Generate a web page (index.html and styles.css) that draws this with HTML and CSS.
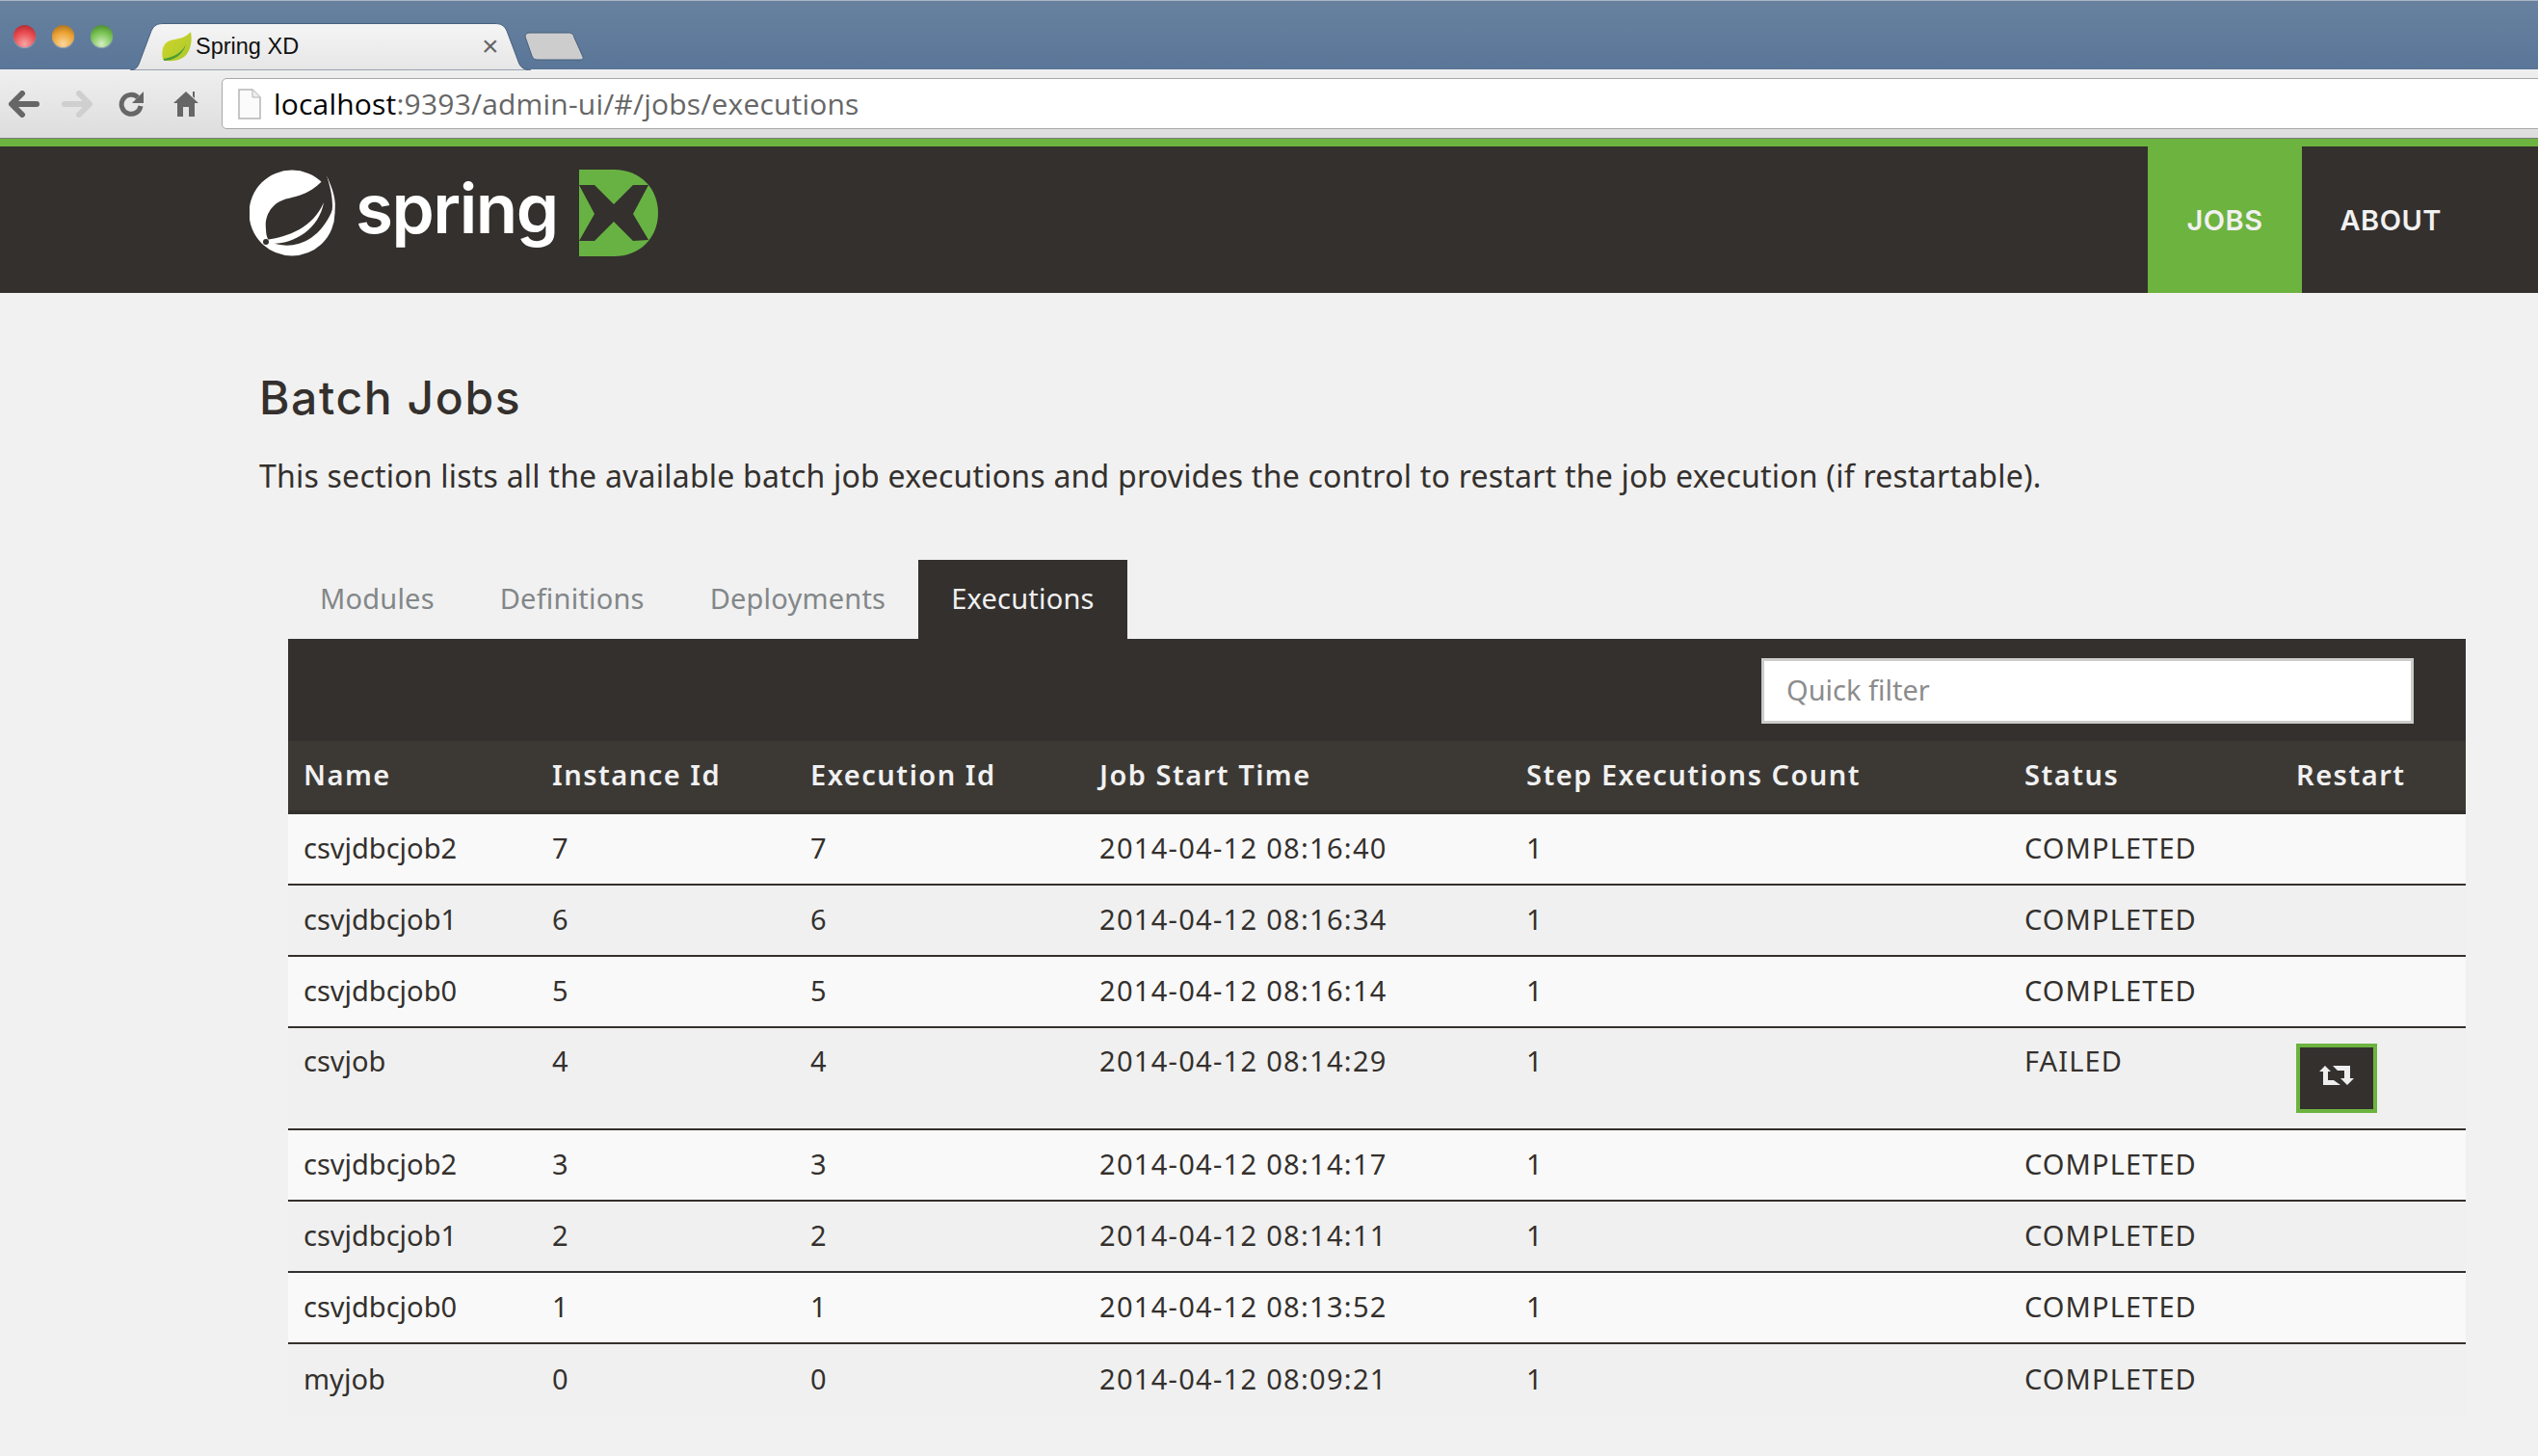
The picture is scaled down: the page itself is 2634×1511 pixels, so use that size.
FILE: index.html
```html
<!DOCTYPE html>
<html lang="en">
<head>
    <meta charset="UTF-8">
    <title>Spring XD</title>
    <link rel="stylesheet" href="styles.css">
</head>
<body>
    <div class="titlebar">
        <div class="lights">
            <span class="light red"></span>
            <span class="light orange"></span>
            <span class="light green"></span>
        </div>
        <div class="tab">
            <svg class="tab-shape" width="416" height="49" viewBox="0 0 416 49">
                <defs>
                    <linearGradient id="tabfill" x1="0" y1="0" x2="0" y2="1">
                        <stop offset="0" stop-color="#f5f5f5"/>
                        <stop offset="1" stop-color="#e6e6e6"/>
                    </linearGradient>
                </defs>
                <path d="M0 49 C6 48 8 46 10 40 L22 8 C25 2 28 0.5 35 0.5 L378 0.5 C385 0.5 388 2 391 8 L403 40 C405 46 408 48 416 49 Z" fill="url(#tabfill)" stroke="#47607d" stroke-width="1"/>
            </svg>
            <svg class="favicon" width="32" height="31" viewBox="0 0 32 31">
                <defs>
                    <linearGradient id="leaf" x1="0" y1="0" x2="1" y2="1">
                        <stop offset="0" stop-color="#d3d62a"/>
                        <stop offset="1" stop-color="#a9c92c"/>
                    </linearGradient>
                </defs>
                <path d="M31 0 C25 7 17 7 10 9 C3 11 0 18 2 29 C12 32 26 30 30 17 C32 11 32 5 31 0 Z" fill="url(#leaf)"/>
                <path d="M3 28 C13 26 21 23 26 13 C23 24 13 30 3 30 Z" fill="#4c9a35"/>
            </svg>
            <span class="tab-title">Spring XD</span>
            <span class="tab-close">&#215;</span>
        </div>
        <svg class="new-tab" width="62" height="30" viewBox="0 0 62 30">
            <path d="M1 5 C1 2 3 1 6 1 L45 1 C49 1 51 2 52 6 L61 26 C62 28 60 29 58 29 L15 29 C11 29 9 28 8 25 Z" fill="#cdcdcd" stroke="#47607d" stroke-width="1"/>
        </svg>
    </div>

    <div class="toolbar">
        <svg class="tool-icon tool-back" width="32" height="28" viewBox="0 0 32 28">
            <path d="M14 3 L3 14 L14 25 M4 14 L29 14" fill="none" stroke="#666" stroke-width="6" stroke-linecap="round" stroke-linejoin="round"/>
        </svg>
        <svg class="tool-icon tool-forward" width="32" height="28" viewBox="0 0 32 28">
            <path d="M18 3 L29 14 L18 25 M28 14 L3 14" fill="none" stroke="#cfcfcf" stroke-width="6" stroke-linecap="round" stroke-linejoin="round"/>
        </svg>
        <svg class="tool-icon tool-reload" width="28" height="28" viewBox="0 0 28 28">
            <path d="M21 7 A10 10 0 1 0 24 16" fill="none" stroke="#666" stroke-width="5"/>
            <path d="M27 1 L27 13 L15 13 Z" fill="#666"/>
        </svg>
        <svg class="tool-icon tool-home" width="26" height="28" viewBox="0 0 26 28">
            <path d="M13 1 L26 13 L22 13 L22 27 L16 27 L16 17 L10 17 L10 27 L4 27 L4 13 L0 13 Z M20 1 L22 1 L22 8 L20 6 Z" fill="#666"/>
        </svg>
        <div class="omnibox">
            <svg class="page-icon" width="24" height="32" viewBox="0 0 24 32">
                <path d="M1 1 L15 1 L23 9 L23 31 L1 31 Z" fill="#fbfbfb" stroke="#b5b5b5" stroke-width="1.5"/>
                <path d="M15 1 L15 9 L23 9" fill="#eee" stroke="#b5b5b5" stroke-width="1"/>
            </svg>
            <span class="url"><b>localhost</b>:9393/admin-ui/#/jobs/executions</span>
        </div>
    </div>

    <header class="site-header">
        <div class="logo">
            <svg class="logo-leaf" width="92" height="90" viewBox="0 0 92 90">
                <circle cx="44" cy="45" r="44.5" fill="#fff"/>
                <path d="M81 5 C67 24 52 27 40 30 C25 33 15 46 17 62 C17 67 18 70 20 74 C38 84 70 80 86 42 C87 28 85 16 81 5 Z" fill="#34302d"/>
                <path d="M80 6 C86 20 91 32 88 46 C86 58 80 66 72 74 L70 72 C80 60 86 48 86 38 C86 26 83 16 80 6 Z" fill="#fff"/>
                <path d="M17 73 C40 70 66 60 77 34 C72 62 46 78 20 77 Z" fill="#fff"/>
                <circle cx="17" cy="75" r="3" fill="#34302d"/>
            </svg>
            <span class="logo-text">spring</span>
            <svg class="logo-x" width="82" height="90" viewBox="0 0 82 90">
                <path d="M0 0 H36 C64 0 82 20 82 45 C82 70 64 90 36 90 H0 Z" fill="#67b243"/>
                <path d="M0 16 L16 16 L36 36 L56 16 L72 16 L56 46 L72 73 L56 74 L36 54 L16 74 L0 74 L16 46 Z" fill="#34302d"/>
            </svg>
        </div>
        <nav class="main-nav">
            <a class="nav-link active">JOBS</a>
            <a class="nav-link">ABOUT</a>
        </nav>
    </header>

    <main class="content">
        <h1>Batch Jobs</h1>
        <p class="intro">This section lists all the available batch job executions and provides the control to restart the job execution (if restartable).</p>

        <div class="panel">
            <ul class="tabs">
                <li>Modules</li>
                <li>Definitions</li>
                <li>Deployments</li>
                <li class="active">Executions</li>
            </ul>
            <div class="filter-bar">
                <input class="quick-filter" type="text" placeholder="Quick filter">
            </div>
            <table class="jobs">
                <thead>
                    <tr>
                        <th class="c-name">Name</th>
                        <th class="c-inst">Instance Id</th>
                        <th class="c-exec">Execution Id</th>
                        <th class="c-time">Job Start Time</th>
                        <th class="c-step">Step Executions Count</th>
                        <th class="c-status">Status</th>
                        <th class="c-restart">Restart</th>
                    </tr>
                </thead>
                <tbody>
                    <tr><td>csvjdbcjob2</td><td>7</td><td>7</td><td>2014-04-12 08:16:40</td><td>1</td><td>COMPLETED</td><td></td></tr>
                    <tr><td>csvjdbcjob1</td><td>6</td><td>6</td><td>2014-04-12 08:16:34</td><td>1</td><td>COMPLETED</td><td></td></tr>
                    <tr><td>csvjdbcjob0</td><td>5</td><td>5</td><td>2014-04-12 08:16:14</td><td>1</td><td>COMPLETED</td><td></td></tr>
                    <tr class="failed">
                        <td>csvjob</td><td>4</td><td>4</td><td>2014-04-12 08:14:29</td><td>1</td><td>FAILED</td>
                        <td class="restart-cell">
                            <button class="restart-btn">
                                <svg width="36" height="20" viewBox="0 0 36 20">
                                    <path d="M6 0 L12 6 L9 6 L9 15 L15 15 L22 20 L4 20 L4 6 L0 6 Z" fill="#eeeeee"/>
                                    <path d="M14 0 L32 0 L32 13 L36 13 L29 20 L22 13 L26 13 L26 5 L19 5 Z" fill="#eeeeee"/>
                                </svg>
                            </button>
                        </td>
                    </tr>
                    <tr><td>csvjdbcjob2</td><td>3</td><td>3</td><td>2014-04-12 08:14:17</td><td>1</td><td>COMPLETED</td><td></td></tr>
                    <tr><td>csvjdbcjob1</td><td>2</td><td>2</td><td>2014-04-12 08:14:11</td><td>1</td><td>COMPLETED</td><td></td></tr>
                    <tr><td>csvjdbcjob0</td><td>1</td><td>1</td><td>2014-04-12 08:13:52</td><td>1</td><td>COMPLETED</td><td></td></tr>
                    <tr><td>myjob</td><td>0</td><td>0</td><td>2014-04-12 08:09:21</td><td>1</td><td>COMPLETED</td><td></td></tr>
                </tbody>
            </table>
        </div>
    </main>
</body>
</html>
```
FILE: styles.css
```css
html, body {
    margin: 0;
    padding: 0;
    overflow: hidden;
}
body {
    background: #f1f1f1;
    font-family: "Noto Sans", sans-serif;
    color: #34302d;
    height: 1511px;
}

/* browser frame */
.titlebar {
    display: flex;
    align-items: flex-end;
    height: 72px;
    box-sizing: border-box;
    border-top: 1px solid #a9b6c4;
    background: linear-gradient(#67819f, #5a7698);
}
.lights {
    display: flex;
    gap: 17px;
    padding: 0 0 23px 14px;
    width: 121px;
    box-sizing: border-box;
}
.light {
    width: 23px;
    height: 23px;
    border-radius: 50%;
    box-shadow: 0 1px 1px rgba(255, 255, 255, 0.35);
}
.light.red {
    background: radial-gradient(circle at 50% 85%, #f6a5a5 0, #e8484d 55%, #9c2429 100%);
}
.light.orange {
    background: radial-gradient(circle at 50% 85%, #fbd79d 0, #eba030 55%, #90621c 100%);
}
.light.green {
    background: radial-gradient(circle at 50% 85%, #d3efc0 0, #76c050 55%, #3c7a27 100%);
}
.tab {
    position: relative;
    display: flex;
    align-items: center;
    width: 416px;
    height: 48px;
    margin-left: 14px;
    padding-left: 32px;
    box-sizing: border-box;
}
.tab-shape {
    position: absolute;
    left: 0;
    top: 0;
}
.favicon, .tab-title, .tab-close {
    position: relative;
}
.tab-title {
    margin-left: 4px;
    font-family: "Liberation Sans", sans-serif;
    font-size: 23.5px;
    color: #111;
    width: 290px;
}
.tab-close {
    font-family: "Liberation Sans", sans-serif;
    font-size: 30px;
    color: #666;
    margin-left: 7px;
}
.new-tab {
    margin: 0 0 9px -7px;
}
.toolbar {
    display: flex;
    align-items: center;
    height: 72px;
    box-sizing: border-box;
    padding-left: 9px;
    border-bottom: 1px solid #7b7b7b;
    background: linear-gradient(#efefef, #dddddd);
    overflow: hidden;
}
.tool-icon {
    flex: none;
}
.tool-back { margin-right: 23px; }
.tool-forward { margin-right: 26px; }
.tool-reload { margin-right: 30px; }
.tool-home { margin-right: 24px; }
.omnibox {
    display: flex;
    align-items: center;
    flex: 1;
    height: 53px;
    margin-right: -10px;
    padding-left: 16px;
    box-sizing: border-box;
    background: #fff;
    border: 1px solid #a8a8a8;
    border-radius: 5px;
}
.page-icon {
    margin-right: 13px;
}
.url {
    font-family: "Open Sans", sans-serif;
    font-size: 30px;
    letter-spacing: 0.2px;
    color: #666;
}
.url b {
    font-weight: normal;
    color: #000;
}

/* site header */
.site-header {
    display: flex;
    justify-content: space-between;
    height: 160px;
    box-sizing: border-box;
    border-top: 8px solid #6db33f;
    background: #34302d;
}
.logo {
    display: flex;
    align-items: center;
    padding: 0 0 0 259px;
    height: 134px;
    margin-top: 2px;
}
.logo-text {
    flex: none;
    width: 232px;
    margin: 0 0 10px 18px;
    font-family: Inter, sans-serif;
    font-weight: 600;
    font-size: 71px;
    letter-spacing: -1.5px;
    color: #fff;
    line-height: 90px;
}
.main-nav {
    display: flex;
    margin-right: 60px;
}
.nav-link {
    display: flex;
    align-items: center;
    padding: 0 40px;
    font-family: Inter, sans-serif;
    font-weight: 600;
    font-size: 29px;
    letter-spacing: 0.5px;
    color: #f1f1f1;
}
.nav-link.active {
    background: #6db33f;
}

/* page content */
.content {
    padding: 0 75px 0 269px;
}
h1 {
    margin: 0;
    padding-top: 78px;
    font-family: Inter, sans-serif;
    font-size: 48px;
    font-weight: 500;
    letter-spacing: 1.6px;
    line-height: 62px;
}
.intro {
    margin: 28px 0 0;
    font-size: 32px;
    letter-spacing: 0.22px;
    line-height: 44px;
}
.panel {
    margin: 65px 0 0 30px;
}
.tabs {
    display: flex;
    list-style: none;
    margin: 0 0 0 -1px;
    padding: 0;
    height: 82px;
}
.tabs li {
    padding: 0 34px;
    font-size: 29px;
    letter-spacing: 0.2px;
    line-height: 80px;
    color: #838789;
}
.tabs li.active {
    background: #34302d;
    color: #f1f1f1;
}
.filter-bar {
    display: flex;
    justify-content: flex-end;
    height: 106px;
    box-sizing: border-box;
    padding: 20px 54px 0 0;
    background: #34302d;
}
.quick-filter {
    width: 677px;
    height: 68px;
    box-sizing: border-box;
    padding: 0 23px 4px;
    background: #fff;
    border: 3px solid #cccccc;
    font-family: "Noto Sans", sans-serif;
    font-size: 29px;
}
.quick-filter::placeholder {
    color: #8c8c8c;
}
.jobs {
    width: 2260px;
    border-collapse: separate;
    border-spacing: 0;
    table-layout: fixed;
    font-size: 29px;
    line-height: 40px;
}
.jobs th {
    box-sizing: border-box;
    height: 76px;
    padding: 0 0 2px 16px;
    border-bottom: 4px solid #34302d;
    background: #3c3935;
    color: #f1f1f1;
    text-align: left;
    font-weight: 600;
    letter-spacing: 1.5px;
}
.c-name { width: 258px; }
.c-inst { width: 268px; }
.c-exec { width: 300px; }
.c-time { width: 443px; }
.c-step { width: 517px; }
.c-status { width: 282px; }
.jobs td {
    box-sizing: border-box;
    height: 74px;
    padding: 0 0 3px 16px;
    border-bottom: 2px solid #34302d;
}
.jobs td:nth-child(4) {
    letter-spacing: 1.3px;
}
.jobs td:nth-child(6) {
    letter-spacing: 1.1px;
}
.jobs tbody tr:nth-child(odd) {
    background: #f9f9f9;
}
.jobs tbody tr:nth-child(even) {
    background: #f0f0f0;
}
.jobs tbody tr:last-child td {
    border-bottom: none;
}
.jobs .failed td {
    height: 106px;
    padding-top: 14px;
    padding-bottom: 0;
    vertical-align: top;
}
.jobs .failed .restart-cell {
    padding-top: 16px;
}
.restart-btn {
    display: flex;
    align-items: center;
    justify-content: center;
    width: 84px;
    height: 72px;
    padding: 0 0 6px;
    background: #34302d;
    border: 4px solid #6db33f;
}
```
